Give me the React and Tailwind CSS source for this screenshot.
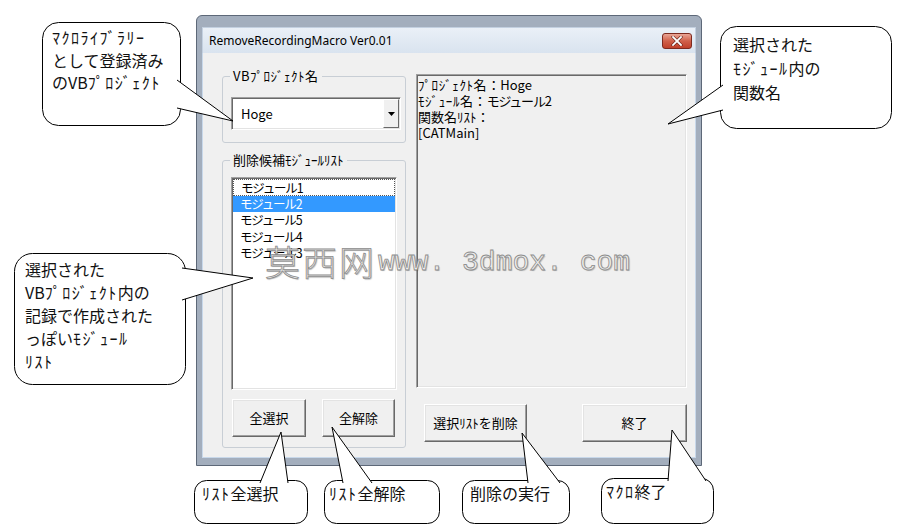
import React from "react";

const bubbles = [
  { x: 42, y: 22, w: 138, h: 103, r: 16, tail: [[177, 80], [233, 121], [177, 108]] },
  { x: 14, y: 253, w: 171, h: 131, r: 18, tail: [[182, 268], [253, 278], [182, 300]] },
  { x: 720, y: 26, w: 171, h: 102, r: 16, tail: [[723, 85], [668, 124], [723, 110]] },
  { x: 194, y: 480, w: 113, h: 43, r: 12, tail: [[260, 483], [281, 432], [288, 483]] },
  { x: 324, y: 480, w: 115, h: 43, r: 12, tail: [[343, 483], [332, 427], [372, 483]] },
  { x: 462, y: 480, w: 107, h: 43, r: 12, tail: [[528, 483], [522, 433], [560, 483]] },
  { x: 601, y: 478, w: 112, h: 45, r: 12, tail: [[668, 481], [672, 430], [706, 481]] },
];

function Callouts() {
  return (
    <svg className="absolute left-0 top-0" width="901" height="527" viewBox="0 0 901 527">
      {bubbles.map((b, i) => (
        <g key={i}>
          <rect x={b.x + 0.5} y={b.y + 0.5} width={b.w} height={b.h} rx={b.r} ry={b.r} fill="#fff" stroke="#000" strokeWidth="1" />
          <polyline points={b.tail.map((p) => p.join(",")).join(" ")} fill="#fff" stroke="#000" strokeWidth="1" />
        </g>
      ))}
    </svg>
  );
}

function Sunken({ className = "", children }) {
  return (
    <div className={"border border-t-[#a0a0a0] border-l-[#a0a0a0] border-b-white border-r-white shadow-[inset_1px_1px_0_#696969,inset_-1px_-1px_0_#e3e3e3] " + className}>
      {children}
    </div>
  );
}

function Btn({ className = "", children }) {
  return (
    <div className={"flex items-center justify-center bg-[#f0f0f0] border border-t-white border-l-white border-b-[#696969] border-r-[#696969] shadow-[inset_-1px_-1px_0_#a0a0a0,inset_1px_1px_0_#e3e3e3] text-[13px] text-black " + className}>
      {children}
    </div>
  );
}

function H({ children }) {
  return <span className="tracking-[1.5px]">{children}</span>;
}

const ui = "font-['Noto_Sans_CJK_JP',sans-serif]";
const bub = "font-['Noto_Sans_CJK_JP',sans-serif] text-[16px] text-[#111] whitespace-nowrap";

export default function App() {
  const items = ["モジュール1", "モジュール2", "モジュール5", "モジュール4", "モジュール3"];
  return (
    <div className="relative w-[901px] h-[527px] bg-white overflow-hidden">
      {/* window */}
      <div className="ml-[196px] mt-[15px] w-[506px] h-[451px] border border-[#5d6878] bg-[#a3aebd] pt-[11px] px-[5px] pb-[7px] flex flex-col rounded-t-[6px]">
        <div className="h-[26px] bg-gradient-to-b from-[#eaf0f7] to-[#d9e3ef] flex items-start justify-between border-x border-t border-[#c3d0e0]">
          <div className="pl-[6px] pt-[5px] text-[12px] leading-[16px] text-black font-['Noto_Sans',sans-serif]">
            RemoveRecordingMacro Ver0.01
          </div>
          <div className="mt-[5px] mr-[3px] w-[30px] h-[16px] rounded-[3px] border border-[#7d2a1f] bg-gradient-to-b from-[#e9a596] via-[#d0604a] to-[#c0402a] flex items-center justify-center">
            <svg width="12" height="10" viewBox="0 0 12 10">
              <path d="M2 1 L10 9 M10 1 L2 9" stroke="#5a1a10" strokeWidth="3" strokeLinecap="square" />
              <path d="M2 1 L10 9 M10 1 L2 9" stroke="#fff" strokeWidth="1.8" strokeLinecap="square" />
            </svg>
          </div>
        </div>
        <div className={"flex-1 bg-[#f0f0f0] border-x border-b border-[#c8d8ea] flex items-start text-black " + ui}>
          {/* left column */}
          <div className="ml-[19px] mt-[16px] w-[184px] flex flex-col">
            <fieldset className="border border-[#c8ced5] rounded-[3px] pb-[12px]">
              <legend className="ml-[7px] px-[3px] text-[13px] leading-[14px] tracking-[0.5px]">VBﾌﾟﾛｼﾞｪｸﾄ名</legend>
              <Sunken className="ml-[8px] mt-[14px] w-[170px] h-[33px] bg-white flex items-stretch">
                <div className="flex-1 flex items-center pl-[9px] text-[13px]">Hoge</div>
                <div className="my-[1px] mr-[1px] w-[16px] bg-[#f0f0f0] border border-t-white border-l-white border-b-[#696969] border-r-[#696969] flex items-center justify-center">
                  <svg width="7" height="4" viewBox="0 0 7 4"><path d="M0 0 H7 L3.5 4 Z" fill="#000" /></svg>
                </div>
              </Sunken>
            </fieldset>
            <fieldset className="mt-[10px] border border-[#c8ced5] rounded-[3px] pb-[10px]">
              <legend className="ml-[7px] px-[3px] text-[13px] leading-[14px]">削除候補ﾓｼﾞｭｰﾙﾘｽﾄ</legend>
              <Sunken className="ml-[8px] mt-[10px] w-[166px] h-[213px] bg-white py-[1px] px-[1px]">
                {items.map((t, i) => (
                  <div
                    key={i}
                    className={
                      "h-[16.5px] leading-[15.5px] pl-[7px] text-[12.5px] tracking-[-1.2px] " +
                      (i === 1 ? "bg-[#3399ff] text-white" : "") +
                      (i === 0 ? " border border-dotted border-[#555] leading-[13.5px] pl-[6px]" : "")
                    }
                  >
                    {t}
                  </div>
                ))}
              </Sunken>
              <div className="mt-[9px] flex">
                <Btn className="ml-[9px] w-[74px] h-[38px]">全選択</Btn>
                <Btn className="ml-[16px] w-[73px] h-[38px]">全解除</Btn>
              </div>
            </fieldset>
          </div>
          {/* right column */}
          <div className="ml-[10px] mt-[21px] flex flex-col">
            <Sunken className="w-[271px] h-[314px] pl-[1px] pt-[2px] text-[13px] leading-[16px]">
              <div><span className="tracking-[0.6px]">ﾌﾟﾛｼﾞｪｸﾄ名</span>：Hoge</div>
              <div><span className="tracking-[0.6px]">ﾓｼﾞｭｰﾙ名</span>：<span className="tracking-[-1.2px]">モジュール2</span></div>
              <div>関数名ﾘｽﾄ：</div>
              <div>[CATMain]</div>
            </Sunken>
            <div className="mt-[16px] flex">
              <Btn className="ml-[8px] w-[103px] h-[38px]">選択ﾘｽﾄを削除</Btn>
              <Btn className="ml-[55px] w-[105px] h-[38px]">終了</Btn>
            </div>
          </div>
        </div>
      </div>

      {/* watermark */}
      <div className="absolute left-[265px] top-[241px] flex items-end text-[#ececec] [-webkit-text-stroke:0.8px_#8c8c8c] [text-shadow:1px_1px_1px_rgba(0,0,0,0.25)] pointer-events-none whitespace-nowrap">
        <span className="text-[35px] leading-[40px] tracking-[2px] font-['Noto_Sans_CJK_SC',sans-serif] font-light">莫西网</span>
        <span className="ml-[2px] text-[28px] leading-[36px] font-['Liberation_Mono',monospace]">www. 3dmox. com</span>
      </div>

      {/* callouts */}
      <Callouts />
      <div className={"absolute left-[52px] top-[26px] leading-[22.5px] " + bub}>
        <div><H>ﾏｸﾛﾗｲﾌﾞﾗﾘｰ</H></div>
        <div>として登録済み</div>
        <div>のVB<H>ﾌﾟﾛｼﾞｪｸﾄ</H></div>
      </div>
      <div className={"absolute left-[25px] top-[258px] leading-[23px] " + bub}>
        <div>選択された</div>
        <div>VB<H>ﾌﾟﾛｼﾞｪｸﾄ</H>内の</div>
        <div>記録で作成された</div>
        <div>っぽい<H>ﾓｼﾞｭｰﾙ</H></div>
        <div><H>ﾘｽﾄ</H></div>
      </div>
      <div className={"absolute left-[733px] top-[32px] leading-[24px] " + bub}>
        <div>選択された</div>
        <div><H>ﾓｼﾞｭｰﾙ</H>内の</div>
        <div>関数名</div>
      </div>
      <div className={"absolute left-[202px] top-[482px] leading-[22px] " + bub}><H>ﾘｽﾄ</H>全選択</div>
      <div className={"absolute left-[329px] top-[482px] leading-[22px] " + bub}><H>ﾘｽﾄ</H>全解除</div>
      <div className={"absolute left-[470px] top-[482px] leading-[22px] " + bub}>削除の実行</div>
      <div className={"absolute left-[606px] top-[480px] leading-[22px] " + bub}><H>ﾏｸﾛ</H>終了</div>
    </div>
  );
}
